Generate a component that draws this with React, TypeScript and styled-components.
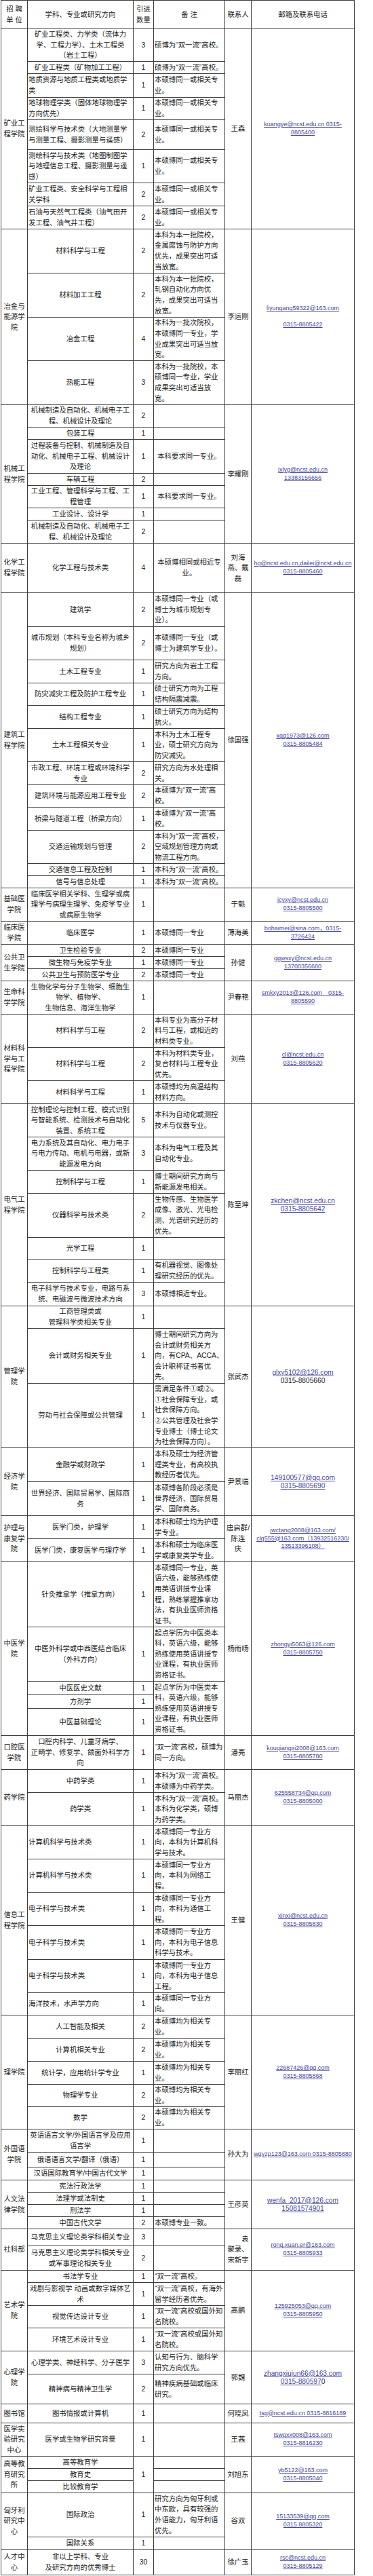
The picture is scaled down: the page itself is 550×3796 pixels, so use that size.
import React from "react";
import styled, { createGlobalStyle } from "styled-components";

type Align = "left" | "center";
type MailLine = string | { a?: string; p?: string };

interface Item {
  s: string;
  n: string | null;
  r: string | null;
  h: number;
  sa?: Align;
  ra?: Align;
  ns?: number;
  rs?: number;
  pre?: boolean;
}

interface Group {
  unit: string;
  who: string;
  mail: MailLine[];
  big?: boolean;
  rows: Item[];
}

const row = (s: string, n: string | null, r: string | null, h: number, extra: Partial<Item> = {}): Item => ({
  s,
  n,
  r,
  h,
  ...extra,
});

const L: Partial<Item> = { sa: "left" };
const SAME = "本硕博同一或相关专业。";
const DOUBLE = "本科为“双一流”高校。";
const LIKE = "本硕博均为相关专业。";
const ZY = "起点学历为中医类本科，英语六级，能够熟练使用英语讲授专业课程，有执业医师资格证书。";

const groups: Group[] = [
  {
    unit: "矿业工程学院",
    who: "王森",
    mail: ["kuangye@ncst.edu.cn 0315-", "8805400"],
    rows: [
      row("矿业工程类、力学类（流体力\n学、工程力学）、土木工程类\n（岩土工程）", "3", "硕博为“双一流”高校。", 48),
      row("矿业工程类（矿物加工工程）", "1", "硕博为“双一流”高校。", 18),
      row("地质资源与地质工程类或地质学类", "1", SAME, 35, L),
      row("地球物理学类（固体地球物理学方向优先）", "1", SAME, 33, L),
      row("测绘科学与技术类（大地测量学与测量工程、摄影测量与遥感）", "2", SAME, 44, L),
      row("测绘科学与技术类（地图制图学与地理信息工程、摄影测量与遥感）", "1", SAME, 49, L),
      row("矿业工程类、安全科学与工程相关学科", "2", SAME, 34, L),
      row("石油与天然气工程类（油气田开发工程、油气井工程）", "2", SAME, 34, L),
    ],
  },
  {
    unit: "冶金与能源学院",
    who: "李运刚",
    mail: ["liyungang59322@163.com", { p: "" }, "0315-8805422"],
    rows: [
      row("材料科学与工程", "2", "本科为本一批院校，金属腐蚀与防护方向优先，成果突出可适当放宽。", 65),
      row("材料加工工程", "2", "本科为本一批院校，轧钢自动化方向优先，成果突出可适当放宽。", 65),
      row("冶金工程", "4", "本科为一批次院校，本硕博同一专业，学业成果突出可适当放宽。", 64),
      row("热能工程", "3", "本科为一批院校，本硕博同一专业，学业成果突出可适当放宽。", 65),
    ],
  },
  {
    unit: "机械工程学院",
    who: "李耀刚",
    mail: ["jxlyg@ncst.edu.cn", "13383156656"],
    rows: [
      row("机械制造及自动化、机械电子工程、机械设计及理论", "2", "", 33),
      row("包装工程", "1", "", 18),
      row("过程装备与控制、机械制造及自动化、机械电子工程、机械设计及理论", "1", "本科要求同一专业。", 50, { ra: "center" }),
      row("车辆工程", "2", "", 18),
      row("工业工程、管理科学与工程、工程管理", "1", "本科要求同一专业。", 33, { ra: "center" }),
      row("工业设计、设计学", "1", "", 18),
      row("机械制造及自动化、机械电子工程、机械设计及理论", "2", "", 34),
    ],
  },
  {
    unit: "化学工程学院",
    who: "刘海燕、戴磊",
    mail: ["hg@ncst.edu.cn,dailei@ncst.edu.cn", "0315-8805460"],
    rows: [row("化学工程与技术类", "4", "本硕博相同或相近专业。", 73, { ra: "center" })],
  },
  {
    unit: "建筑工程学院",
    who: "徐国强",
    mail: ["xgq1973@126.com", "0315-8805484"],
    rows: [
      row("建筑学", "2", "本硕博同一专业（或博士为城市规划专业）。", 50),
      row("城市规划（本科专业名称为城乡规划）", "2", "本硕博同一专业（或博士为建筑学专业）。", 49),
      row("土木工程专业", "1", "研究方向为岩土工程方向。", 34),
      row("防灾减灾工程及防护工程专业", "1", "硕士研究方向为工程结构隔震减震。", 33),
      row("结构工程专业", "1", "硕士研究方向为结构抗火。", 34),
      row("土木工程相关专业", "1", "本科为土木工程专业，硕士研究方向为防灾减灾。", 49),
      row("市政工程、环境工程或环境科学专业", "2", "研究方向为水处理相关。", 34),
      row("建筑环境与能源应用工程专业", "2", "本硕博为“双一流”高校。", 33),
      row("桥梁与隧道工程（桥梁方向）", "1", "本硕博为“双一流”高校。", 34),
      row("交通运输规划与管理", "2", "本科为“双一流”高校，空域规划管理方向或物流工程方向。", 49),
      row("交通信息工程及控制", "1", DOUBLE, 18),
      row("信号与信息处理", "1", DOUBLE, 18),
    ],
  },
  {
    unit: "基础医学院",
    who: "于魁",
    mail: ["jcyxy@ncst.edu.cn", "0315-8805500"],
    rows: [row("临床医学相关学科、生理学或病理学与病理生理学、免疫学专业或病原生物学", "1", "", 49)],
  },
  {
    unit: "临床医学院",
    who: "薄海美",
    mail: ["bohaimei@sina.com，0315-", "3726424"],
    rows: [row("临床医学", "1", "本硕博同一专业", 34)],
  },
  {
    unit: "公共卫生学院",
    who: "孙健",
    mail: ["ggwsxy@ncst.edu.cn", "13700356680"],
    rows: [
      row("卫生检验专业", "2", "本硕博同一专业", 18),
      row("微生物与免疫学专业", "1", "本硕博同一专业", 18),
      row("公共卫生与预防医学专业", "2", "本硕博同一专业", 18),
    ],
  },
  {
    unit: "生命科学学院",
    who: "尹春艳",
    mail: ["smkxy2013@126.com　0315-", "8805590"],
    rows: [row("生物化学与分子生物学、细胞生\n物学、植物学、\n生物信息、海洋生物学", "1", "", 49)],
  },
  {
    unit: "材料科学与工程学院",
    who: "刘燕",
    mail: ["cl@ncst.edu.cn", "0315-8805620"],
    rows: [
      row("材料科学与工程", "2", "本科专业为高分子材料与工程，或相近的材料类专业。", 49),
      row("材料科学与工程", "2", "本科为材料类专业，复合材料与工程专业优先。", 49),
      row("材料科学与工程", "1", "本硕博均为高温结构材料方向。", 34),
    ],
  },
  {
    unit: "电气工程学院",
    who: "陈至坤",
    big: true,
    mail: ["zkchen@ncst.edu.cn", "0315-8805642"],
    rows: [
      row("控制理论与控制工程、模式识别与智能系统、检测技术与自动化装置、系统工程", "5", "本科为自动化或测控技术与仪器专业。", 49),
      row("电力系统及其自动化、电力电子与电力传动、电机与电器，或新能源发电方向", "3", "本科为电气工程及其自动化专业。", 49),
      row("控制科学与工程", "1", "博士期间研究方向与新能源发电相关。", 34),
      row("仪器科学与技术类", "2", "生物传感、生物医学成像、激光、光电检测、光谱研究经历的优先。", 65),
      row("光学工程", "1", "", 33),
      row("控制科学与工程类", "1", "有机器视觉、图像处理研究经历的优先。", 33),
      row("电子科学与技术专业，电路与系统、电磁波与微波技术方向", "3", "本硕博相近专业。", 35),
    ],
  },
  {
    unit: "管理学院",
    who: "张武杰",
    big: true,
    mail: ["glxy5102@126.com", { p: "0315-8805660" }],
    rows: [
      row("工商管理类或\n管理科学类相关专业", "1", "", 33),
      row("会计或财务相关专业", "1", "博士期间研究方向为\n会计或财务相关方\n向，有CPA、ACCA、\n会计职称证书者优\n先。", 81, { pre: true }),
      row(
        "劳动与社会保障或公共管理",
        "1",
        "需满足条件①或②。\n①社会保障专业，或社会保障方向。\n②公共管理及社会学专业博士（博士论文为社会保障方向）。",
        95
      ),
    ],
  },
  {
    unit: "经济学院",
    who: "尹景瑞",
    big: true,
    mail: ["149100577@qq.com", "0315-8805690"],
    rows: [
      row("金融学或财政学", "1", "本科及硕士为经济管理类专业，有高校执教经历者优先。", 50),
      row("世界经济、国际贸易学、国际商务", "1", "本硕博各阶段必须是世界经济、国际贸易学、国际商务。", 50),
    ],
  },
  {
    unit: "护理与康复学院",
    who: "唐启群/\n陈连\n庆",
    mail: ["jwctang2008@163.com/", "clq555@163.com（13932516230/", "13513396108）"],
    rows: [
      row("医学门类，护理学", "1", "本科和硕士均为护理学专业。", 34),
      row("医学门类，康复医学与理疗学", "1", "本科和硕士为临床医学或康复类学专业。", 34),
    ],
  },
  {
    unit: "中医学院",
    who: "杨雨旸",
    mail: ["zhongyi5063@126.com", "0315-8805750"],
    rows: [
      row("针灸推拿学（推拿方向）", "1", "本硕博同一专业，英语六级，能够熟练使用英语讲授专业课程，熟练掌握推拿功法，有执业医师资格证书。", 96),
      row("中医外科学或中西医结合临床（外科方向）", "1", ZY, 80),
      row("中医医史文献", "1", ZY, 20, { rs: 3 }),
      row("方剂学", "1", null, 20),
      row("中医基础理论", "1", null, 40),
    ],
  },
  {
    unit: "口腔医学院",
    who: "潘亮",
    mail: ["kouqiangxi2008@163.com", "0315-8805780"],
    rows: [row("口腔内科学、儿童牙病学、\n正畸学、修复学、颌面外科学方向", "1", "“双一流”高校，硕博为同一方向。", 50)],
  },
  {
    unit: "药学院",
    who: "马丽杰",
    mail: ["625558734@qq.com", "0315-8805000"],
    rows: [
      row("中药学类", "1", "本科为“双一流”高校。\n本硕博为中药学类。", 34),
      row("药学类", "1", "本科为“双一流”高校。\n本科为化学类，硕博为药学类。", 49),
    ],
  },
  {
    unit: "信息工程学院",
    who: "王健",
    mail: ["xinxi@ncst.edu.cn", "0315-8805830"],
    rows: [
      row("计算机科学与技术类", "1", "本硕博同一专业方向，本科为计算机科学与技术。", 49, L),
      row("计算机科学与技术类", "1", "本硕博同一专业方向，本科为网络工程。", 49, L),
      row("电子科学与技术类", "1", "本硕博同一专业方向，本科为通信工程。", 49, L),
      row("电子科学与技术类", "1", "本硕博同一专业方向，本科为电子信息科学与技术。", 50, L),
      row("电子科学与技术类", "1", "本硕博同一专业方向，本科为电子信息工程。", 49, L),
      row("海洋技术，水声学方向", "1", "本硕博同一专业方向。", 33, L),
    ],
  },
  {
    unit: "理学院",
    who: "李丽红",
    mail: ["22687426@qq.com", "0315-8805868"],
    rows: [
      row("人工智能及相关", "2", LIKE, 34),
      row("计算机相关专业", "2", LIKE, 34),
      row("统计学，应用统计学专业", "1", LIKE, 34),
      row("物理学专业", "2", LIKE, 33),
      row("数学", "2", LIKE, 33),
    ],
  },
  {
    unit: "外国语学院",
    who: "孙大为",
    mail: ["wgyzp123@163.com 0315-8805880"],
    rows: [
      row("英语语言文学/外国语言学及应用语言学", "1", "", 34),
      row("俄语语言文学/翻译（俄语）", "1", "", 22),
      row("汉语国际教育学/中国古代文学", "1", "", 19),
    ],
  },
  {
    unit: "人文法律学院",
    who: "王彦英",
    big: true,
    mail: ["wenfa_2017@126.com", "15081574901"],
    rows: [
      row("宪法行政法学", "1", "", 18),
      row("法理学或法制史", "1", "", 18),
      row("刑法学", "1", "", 18),
      row("中国古代文学", "2", "本硕博专业一致。", 18),
    ],
  },
  {
    unit: "社科部",
    who: "\u3000\u3000袁聚录、宋新宇",
    mail: ["rong.xuan.er@163.com", "0315-8805933"],
    rows: [
      row("马克思主义理论类学科相关专业", "3", "", 25),
      row("马克思主义理论类学科相关专业\n或军事理论相关专业", "2", "", 36),
    ],
  },
  {
    unit: "艺术学院",
    who: "高鹏",
    mail: ["125925053@qq.com", "0315-8805950"],
    rows: [
      row("书法学专业", "1", "“双一流”高校。", 18),
      row("戏剧与影视学 动画或数字媒体艺术", "1", "“双一流”高校，有海外留学经历者优先。", 34),
      row("视觉传达设计专业", "1", "“双一流”高校或国外知名院校。", 33),
      row("环境艺术设计专业", "1", "“双一流”高校或国外知名院校。", 34),
    ],
  },
  {
    unit: "心理学院",
    who: "郭魏",
    big: true,
    mail: ["zhangxiujun66@163.com", { a: "0315-880597", p: "0" }],
    rows: [
      row("心理学类、神经科学、分子医学", "3", "认知与行为、脑科学研究方向优先。", 34),
      row("精神病与精神卫生学", "2", "精神疾病基础或临床研究。", 44),
    ],
  },
  {
    unit: "图书馆",
    who: "何晓凤",
    mail: ["tsg@ncst.edu.cn 0315-8816189"],
    rows: [row("图书情报或计算机", "1", "", 28)],
  },
  {
    unit: "医学实验研究中心",
    who: "王茜",
    mail: ["tswgxx008@163.com", "0315-8816230"],
    rows: [row("医学或生物学研究背景", "1", "", 49)],
  },
  {
    unit: "高等教育研究所",
    who: "刘旭东",
    mail: ["yb5122@163.com", "0315-8805040"],
    rows: [
      row("高等教育学", "1", "", 18, { ns: 3 }),
      row("教育史", null, "", 18),
      row("比较教育学", null, "", 18),
    ],
  },
  {
    unit: "匈牙利研究中心",
    who: "谷双",
    mail: ["15133539@qq.com", "0315 8805320"],
    rows: [
      row("国际政治", "1", "研究方向为匈牙利或中东欧，具有较强的外语能力，匈牙利语优先。", 65),
      row("国际关系", "1", "", 18),
    ],
  },
  {
    unit: "人才中心",
    who: "徐广玉",
    mail: ["rsc@ncst.edu.cn", "0315-8805129"],
    rows: [row("非以上学科、专业\n及研究方向的优秀博士", "30", "", 38)],
  },
];

const GlobalStyle = createGlobalStyle`
  html, body {
    margin: 0;
    padding: 0;
    background: #ffffff;
  }
`;

const Page = styled.main`
  padding: 0 0 0 1px;
`;

const Sheet = styled.table`
  border-collapse: collapse;
  table-layout: fixed;
  width: 521px;
  font-family: "Liberation Sans", "Noto Sans CJK SC", sans-serif;
  font-size: 10.4px;
  line-height: 15.6px;
  color: #222222;
`;

const Row = styled.tr<{ $h: number }>`
  height: ${(p) => p.$h}px;
`;

const Cell = styled.td<{ $align?: Align; $pre?: boolean }>`
  border: 1px solid #3d3d3d;
  padding: 0 1px;
  vertical-align: middle;
  text-align: ${(p) => p.$align ?? "center"};
  white-space: ${(p) => (p.$pre ? "pre" : "pre-line")};
  overflow: hidden;
`;

const HeadCell = styled.th`
  border: 1px solid #3d3d3d;
  padding: 0 1px;
  font-weight: normal;
  vertical-align: middle;
  text-align: center;
  white-space: pre-line;
`;

const MailCell = styled(Cell)`
  line-height: 11.7px;
`;

const MailRow = styled.div<{ $big?: boolean }>`
  white-space: nowrap;
  font-family: "Liberation Sans", "Noto Sans CJK SC", sans-serif;
  font-size: ${(p) => (p.$big ? 10.2 : 9)}px;
  line-height: ${(p) => (p.$big ? 12 : 11.7)}px;
  min-height: 11.7px;
`;

const MailLink = styled.a`
  color: #46469e;
  text-decoration: underline;
`;

const Plain = styled.span`
  color: #1e1e1e;
`;

const widths = [39, 156, 30, 105, 39, 152];

function Mail({ lines, big }: { lines: MailLine[]; big?: boolean }) {
  return (
    <>
      {lines.map((l, i) =>
        typeof l === "string" ? (
          <MailRow key={i} $big={big}>
            <MailLink>{l}</MailLink>
          </MailRow>
        ) : (
          <MailRow key={i} $big={big}>
            {l.a && <MailLink>{l.a}</MailLink>}
            {l.p && <Plain>{l.p}</Plain>}
          </MailRow>
        )
      )}
    </>
  );
}

export default function App() {
  return (
    <Page>
      <GlobalStyle />
      <Sheet>
        <colgroup>
          {widths.map((w, i) => (
            <col key={i} style={{ width: w }} />
          ))}
        </colgroup>
        <tbody>
          <Row $h={42}>
            <HeadCell>{"招 聘\n单 位"}</HeadCell>
            <HeadCell>学科、专业或研究方向</HeadCell>
            <HeadCell>{"引进\n数量"}</HeadCell>
            <HeadCell>备 注</HeadCell>
            <HeadCell>联系人</HeadCell>
            <HeadCell>邮箱及联系电话</HeadCell>
          </Row>
          {groups.map((g) =>
            g.rows.map((r, i) => (
              <Row key={`${g.unit}-${i}`} $h={r.h}>
                {i === 0 && <Cell rowSpan={g.rows.length}>{g.unit}</Cell>}
                <Cell $align={r.sa}>{r.s}</Cell>
                {r.n !== null && <Cell rowSpan={r.ns}>{r.n}</Cell>}
                {r.r !== null && (
                  <Cell $align={r.ra ?? "left"} $pre={r.pre} rowSpan={r.rs}>
                    {r.r}
                  </Cell>
                )}
                {i === 0 && <Cell rowSpan={g.rows.length}>{g.who}</Cell>}
                {i === 0 && (
                  <MailCell rowSpan={g.rows.length}>
                    <Mail lines={g.mail} big={g.big} />
                  </MailCell>
                )}
              </Row>
            ))
          )}
        </tbody>
      </Sheet>
    </Page>
  );
}
